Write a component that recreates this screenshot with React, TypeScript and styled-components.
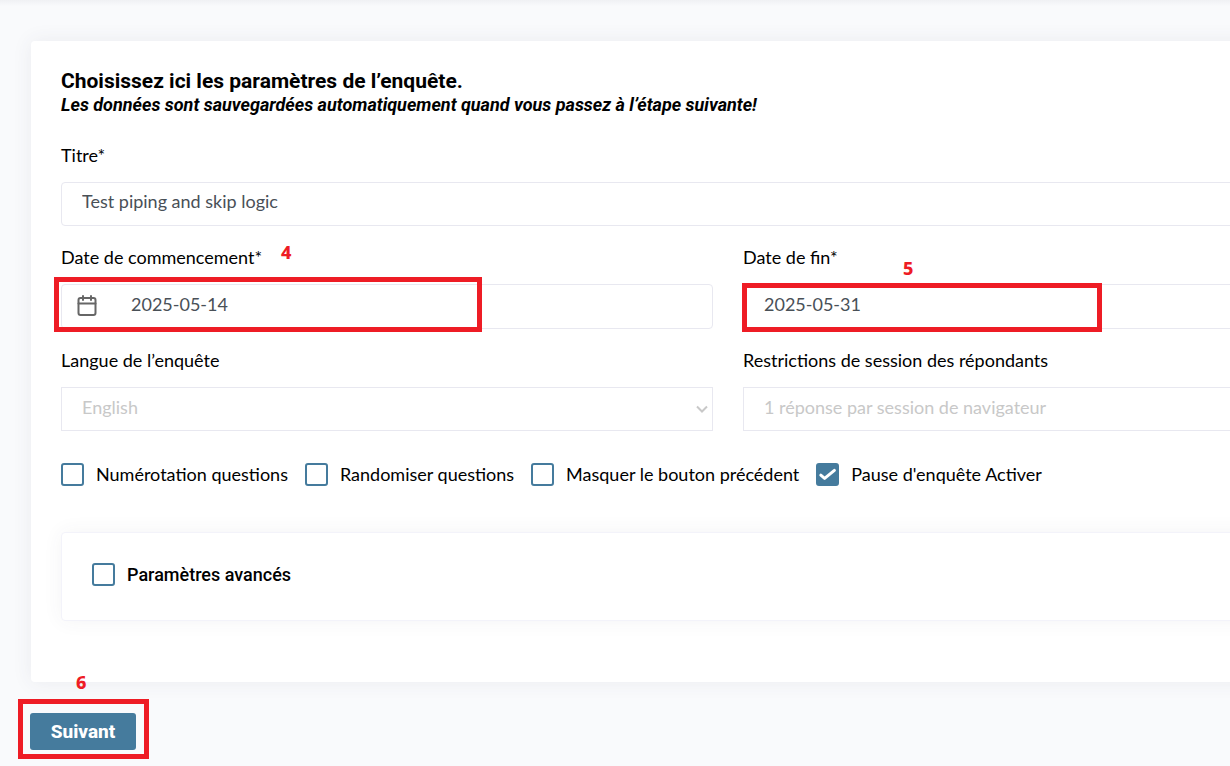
import React, { useState } from "react";
import styled, { createGlobalStyle } from "styled-components";

const RED = "#ee1c25";
const BLUE = "#457b9d";
const LINE = "#e8e8f0";

const GlobalStyle = createGlobalStyle`
  *, *::before, *::after { box-sizing: border-box; }
  body {
    margin: 0;
    background: #f9fafc;
    color: #000;
    font-family: Lato, "Liberation Sans", sans-serif;
    font-size: 18px;
    line-height: 23px;
  }
`;

const Page = styled.div`
  min-height: 100vh;
  padding: 41px 0 7px 31px;
  overflow: hidden;
  background: linear-gradient(#f0f1f4, #f9fafc 6px);
`;

const Card = styled.main`
  margin-right: -195px;
  padding: 29px 30px 61px;
  background: #fff;
  border-radius: 4px;
  box-shadow: 0 0 20px rgba(60, 60, 90, 0.08);
`;

const Title = styled.h1`
  margin: 0;
  font-family: Roboto, sans-serif;
  font-size: 21px;
  line-height: 23px;
  font-weight: 700;
`;

const Subtitle = styled.p`
  margin: 0 0 28px;
  font-family: Roboto, sans-serif;
  font-weight: 700;
  font-style: italic;
`;

const Fields = styled.div`
  display: grid;
  grid-template-columns: 1fr 1fr;
  gap: 20px 30px;
`;

const Field = styled.div<{ $wide?: boolean }>`
  position: relative;
  display: flex;
  flex-direction: column;
  gap: 15px;
  grid-column: ${(p) => (p.$wide ? "1 / -1" : "auto")};
`;

const Control = styled.div`
  position: relative;
  display: flex;
`;

const TextInput = styled.input<{ $icon?: boolean; $tall?: boolean }>`
  width: 100%;
  height: ${(p) => (p.$tall ? "45px" : "44px")};
  padding: 0 20px 6px ${(p) => (p.$icon ? "69px" : "20px")};
  border: 1px solid ${LINE};
  border-radius: 4px;
  background: #fff;
  color: #495057;
  font: inherit;
`;

const Select = styled.select`
  width: 100%;
  height: 44px;
  padding: 0 20px 3px;
  appearance: none;
  border: 1px solid ${LINE};
  border-radius: 0;
  background: #fff;
  color: #c8c8c8;
  font: inherit;
  opacity: 1;
`;

const CalendarIcon = styled.svg`
  position: absolute;
  left: 16px;
  top: 11px;
`;

const Chevron = styled.svg`
  position: absolute;
  right: 5px;
  top: 18px;
`;

const Options = styled.div`
  display: flex;
  gap: 17px;
  margin: 32px 0 46px;
`;

const Option = styled.label<{ $strong?: boolean }>`
  display: flex;
  align-items: center;
  gap: 12px;
  white-space: nowrap;
  font-family: ${(p) => (p.$strong ? "Roboto, sans-serif" : "inherit")};
  font-weight: ${(p) => (p.$strong ? 500 : 400)};
`;

const Box = styled.span`
  position: relative;
  display: flex;
`;

const Tick = styled.svg`
  position: absolute;
  inset: 0;
  pointer-events: none;
`;

const CheckInput = styled.input`
  width: 23px;
  height: 23px;
  margin: 0;
  appearance: none;
  border: 2px solid ${BLUE};
  border-radius: 3px;
  background: #fff;
  &:checked { background: ${BLUE}; }
  & + svg { display: none; }
  &:checked + svg { display: block; }
`;

const Advanced = styled.section`
  padding: 30px 30px 34px;
  border: 1px solid #f3f3fa;
  border-radius: 4px;
  box-shadow: 0 0 20px rgba(60, 60, 90, 0.06);
`;

const Footer = styled.footer`
  position: relative;
  display: flex;
  margin: 31px 0 0 -1px;
`;

const NextButton = styled.button`
  width: 106px;
  height: 37px;
  padding: 0;
  border: 0;
  border-radius: 3px;
  background: ${BLUE};
  color: #fff;
  font-family: Roboto, sans-serif;
  font-size: 19px;
  font-weight: 800;
`;

const Highlight = styled.span<{ $x: number; $y: number; $w: number; $h: number }>`
  position: absolute;
  left: ${(p) => p.$x}px;
  top: ${(p) => p.$y}px;
  width: ${(p) => p.$w}px;
  height: ${(p) => p.$h}px;
  border: 5px solid ${RED};
  pointer-events: none;
`;

const Step = styled.span<{ $x: number; $y: number }>`
  position: absolute;
  left: ${(p) => p.$x}px;
  top: ${(p) => p.$y}px;
  color: ${RED};
  font-family: "Noto Sans", sans-serif;
  font-size: 18px;
  font-weight: 800;
`;

function Check({ label, checked = false, strong }: { label: string; checked?: boolean; strong?: boolean }) {
  const [on, setOn] = useState(checked);
  return (
    <Option $strong={strong}>
      <Box>
        <CheckInput type="checkbox" checked={on} onChange={() => setOn(!on)} />
        <Tick width="23" height="23" viewBox="0 0 23 23" fill="none" stroke="#fff" strokeWidth="3" strokeLinecap="round" strokeLinejoin="round">
          <path d="M4.8 12.2 8.6 15.4 18.4 7.4" />
        </Tick>
      </Box>
      {label}
    </Option>
  );
}

function Arrow() {
  return (
    <Chevron width="12" height="9" viewBox="0 0 12 9" fill="none" stroke="#c8c8c8" strokeWidth="2">
      <path d="M1 1.5 6 6.5 11 1.5" />
    </Chevron>
  );
}

export default function App() {
  return (
    <>
      <GlobalStyle />
      <Page>
        <Card>
          <Title>Choisissez ici les paramètres de l’enquête.</Title>
          <Subtitle>Les données sont sauvegardées automatiquement quand vous passez à l’étape suivante!</Subtitle>
          <Fields>
            <Field $wide>
              <label htmlFor="title">Titre*</label>
              <TextInput id="title" defaultValue="Test piping and skip logic" />
            </Field>
            <Field>
              <label htmlFor="start">Date de commencement*</label>
              <Control>
                <TextInput id="start" $icon $tall defaultValue="2025-05-14" />
                <CalendarIcon width="20" height="22" viewBox="0 0 20 22" fill="none" stroke="#666" strokeWidth="2" strokeLinecap="round">
                  <rect x="1.5" y="3" width="17" height="17" rx="2" />
                  <path d="M1.5 8.5H18.5M6 1V5M14 1V5" />
                </CalendarIcon>
              </Control>
              <Highlight $x={-7} $y={31} $w={428} $h={55} />
              <Step $x={220} $y={-5}>4</Step>
            </Field>
            <Field>
              <label htmlFor="end">Date de fin*</label>
              <TextInput id="end" $tall defaultValue="2025-05-31" />
              <Highlight $x={-1} $y={37} $w={360} $h={49} />
              <Step $x={160} $y={11}>5</Step>
            </Field>
            <Field>
              <label htmlFor="language">Langue de l’enquête</label>
              <Control>
                <Select id="language" disabled>
                  <option>English</option>
                </Select>
                <Arrow />
              </Control>
            </Field>
            <Field>
              <label htmlFor="session">Restrictions de session des répondants</label>
              <Control>
                <Select id="session" disabled>
                  <option>1 réponse par session de navigateur</option>
                </Select>
                <Arrow />
              </Control>
            </Field>
          </Fields>
          <Options>
            <Check label="Numérotation questions" />
            <Check label="Randomiser questions" />
            <Check label="Masquer le bouton précédent" />
            <Check label="Pause d'enquête Activer" checked />
          </Options>
          <Advanced>
            <Check label="Paramètres avancés" strong />
          </Advanced>
        </Card>
        <Footer>
          <NextButton type="button">Suivant</NextButton>
          <Highlight $x={-12} $y={-14} $w={131} $h={60} />
          <Step $x={46} $y={-42}>6</Step>
        </Footer>
      </Page>
    </>
  );
}
